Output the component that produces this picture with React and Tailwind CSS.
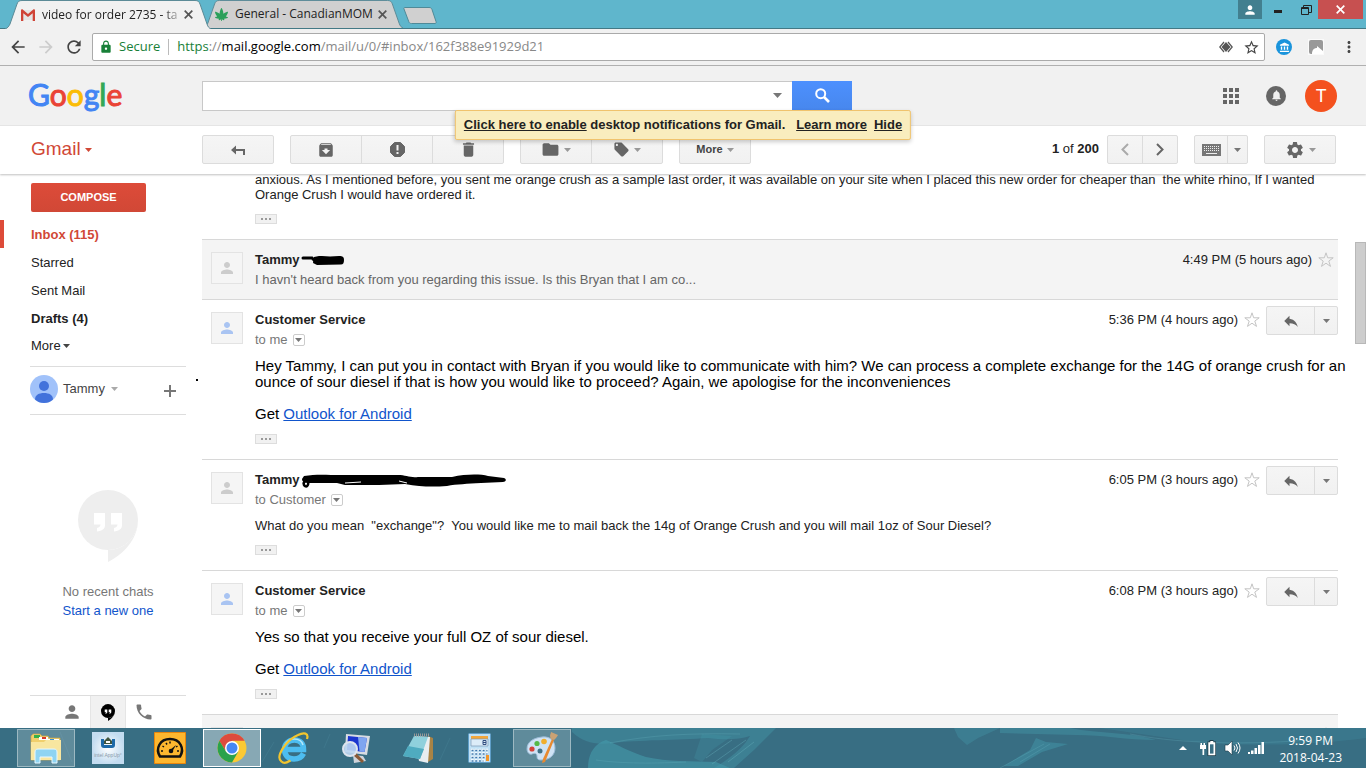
import React from "react";
import { FaCannabis } from "react-icons/fa";
import {
  MdAccountBalance,
  MdArchive,
  MdArrowBack,
  MdArrowForward,
  MdDelete,
  MdFolder,
  MdLocalOffer,
  MdLock,
  MdMoreVert,
  MdNotifications,
  MdPerson,
  MdPhone,
  MdRefresh,
  MdReply,
  MdSettings,
  MdStarBorder,
} from "react-icons/md";

const labels = [
  { name: "Inbox (115)", active: true, bold: true },
  { name: "Starred" },
  { name: "Sent Mail" },
  { name: "Drafts (4)", bold: true },
];

const Caret = ({ className = "text-[#777]" }) => (
  <svg width="7" height="4" viewBox="0 0 7 4" className={`shrink-0 ${className}`}>
    <path d="M0 0h7L3.500 4z" fill="currentColor" />
  </svg>
);

const Cross = () => (
  <svg width="9" height="9" viewBox="0 0 9 9" stroke="currentColor" strokeWidth="1.700">
    <path d="M.7.7l7.600 7.600M8.300.7L.7 8.300" />
  </svg>
);

const Star = () => (
  <button aria-label="Star" className="mt-1.5 text-[#c4c4c4]">
    <svg width="16" height="16" viewBox="0 0 16 16" fill="none" stroke="currentColor">
      <path d="M8 .8l1.700 5h5.500l-4.400 3.300 1.700 5.300L8 11.200l-4.500 3.200 1.700-5.300L.8 5.800h5.500z" />
    </svg>
  </button>
);

const Group = ({ children, className = "" }) => (
  <div
    className={`flex h-[29px] shrink-0 divide-x divide-[#dcdcdc] rounded-xs border border-[#dcdcdc] bg-linear-to-b from-[#f5f5f5] to-[#f1f1f1] text-[#666] ${className}`}
  >
    {children}
  </div>
);

const ToolButton = ({ label, children, className = "" }) => (
  <button aria-label={label} className={`flex flex-1 items-center justify-center gap-1 ${className}`}>
    {children}
  </button>
);

const TabShape = ({ fill }) => (
  <svg className="absolute inset-0 h-full w-full" viewBox="0 0 206 29" preserveAspectRatio="none">
    <path
      d="M0 29C3 28 4 26 5 24L12 4C13 1.500 14 .5 17 .5H190C193 .5 194 1.500 195 4L202 24C203 27 204 28 206 29"
      fill={fill}
      stroke="#5b8a96"
      strokeWidth="1"
    />
  </svg>
);

const BrowserTabs = () => (
  <div className="flex h-[29px] shrink-0 border-b border-[#437985] bg-[#5fb6cc] font-['Open_Sans',sans-serif] text-[12px] text-[#222]">
    <div className="relative z-10 ml-[5px] h-[29px] w-[206px] shrink-0">
      <TabShape fill="#f1f1f1" />
      <div className="relative flex h-full items-center pl-4 pr-[18px]">
        <svg width="14" height="12" viewBox="0 0 14 12" className="shrink-0">
          <path d="M1 1h12v10H1z" fill="#e4e4e4" />
          <path d="M0 1.500C0 .5 1 0 2 .7L7 5l5-4.300c1-.7 2-.2 2 .8V12h-2.300V4.300L7 8 2.300 4.300V12H0z" fill="#cf4336" />
        </svg>
        <span className="ml-[7px] flex-1 whitespace-nowrap mask-r-from-85% mask-r-to-100%">
          video for order 2735 - ta
        </span>
        <button aria-label="Close tab" className="text-[#555]">
          <Cross />
        </button>
      </div>
    </div>
    <div className="relative -ml-2 h-[28px] w-[200px] shrink-0">
      <TabShape fill="#d0d0d0" />
      <div className="relative flex h-full items-center pl-3 pr-4">
        <FaCannabis size={13} className="shrink-0 text-[#2ba05a]" />
        <span className="ml-[7px] flex-1 whitespace-nowrap">General - CanadianMOM</span>
        <button aria-label="Close tab" className="text-[#555]">
          <Cross />
        </button>
      </div>
    </div>
    <button aria-label="New tab" className="mt-[7px] h-[17px]">
      <svg width="34" height="17" viewBox="0 0 34 17">
        <path d="M1 2C.6 1 1 .5 2 .5h24c1.500 0 2.500.5 3 2l4 12c.4 1.300 0 2-1 2H8.500c-1.500 0-2.200-.5-2.700-1.800z" fill="#d0d0d0" stroke="#4f8a98" />
      </svg>
    </button>
    <div className="ml-auto flex h-[19px] items-center text-[#222]">
      <button aria-label="Profile" className="flex h-full w-6 items-center justify-center bg-[#427f8f] text-white">
        <MdPerson size={14} />
      </button>
      <button aria-label="Minimize" className="flex h-full w-8 items-end justify-center pb-1.5">
        <span className="h-[3px] w-2 bg-[#222]" />
      </button>
      <button aria-label="Restore" className="flex h-full w-6 items-center justify-center">
        <svg width="11" height="10" viewBox="0 0 11 10" fill="none" stroke="#222">
          <path d="M.5 2.500h7v7h-7zM.5 3.500h7M2.500 2.500V.5h8v7h-3" />
        </svg>
      </button>
      <button aria-label="Close" className="mr-[3px] flex h-full w-[45px] items-center justify-center bg-[#c75050] text-white">
        <Cross />
      </button>
    </div>
  </div>
);

const AddressBar = () => (
  <div className="flex h-[37px] shrink-0 items-center border-b border-[#b0b0b0] bg-[#f1f1f1] pl-2 font-['Open_Sans',sans-serif] text-[13px] text-[#444]">
    <button aria-label="Back" className="mr-2">
      <MdArrowBack size={20} />
    </button>
    <button aria-label="Forward" className="mr-2 text-[#ccc]">
      <MdArrowForward size={20} />
    </button>
    <button aria-label="Reload" className="mr-2">
      <MdRefresh size={20} />
    </button>
    <div className="flex h-7 flex-1 items-center rounded-xs border border-[#aaa] bg-white pl-1.5 pr-1">
      <MdLock size={14} className="text-[#188038]" />
      <span className="ml-1.5 text-[#188038]">Secure</span>
      <span className="mx-2 h-4 w-px bg-[#bbb]" />
      <div
        role="textbox"
        aria-label="Address"
        contentEditable
        suppressContentEditableWarning
        className="flex-1 whitespace-nowrap text-[#888] outline-none"
      >
        <span className="text-[#188038]">https</span>://<span className="text-black">mail.google.com</span>
        /mail/u/0/#inbox/162f388e91929d21
      </div>
      <svg width="14" height="12" viewBox="0 0 14 12" className="mr-2.5">
        <path d="M5 1L.8 6 5 11M9 1l4.200 5L9 11" fill="none" stroke="#555" strokeWidth="1.200" />
        <path d="M7 1l4.500 5L7 11 2.500 6z" fill="#555" />
      </svg>
      <button aria-label="Bookmark this page">
        <MdStarBorder size={17} />
      </button>
    </div>
    <button aria-label="Library extension" className="ml-[11px] flex size-4 items-center justify-center rounded-full bg-[#1a94dc] text-white">
      <MdAccountBalance size={11} />
    </button>
    <button aria-label="Cast extension" className="ml-4">
      <svg width="16" height="16" viewBox="0 0 16 16">
        <path d="M0 0h16v16H0z" fill="#fafafa" />
        <rect x="1" y="1" width="14" height="14" rx="2" fill="#999" />
        <path d="M4 15c0-4 2-6 5-6V7l6 5v3z" fill="#fff" />
      </svg>
    </button>
    <button aria-label="Menu" className="ml-4 mr-2">
      <MdMoreVert size={18} />
    </button>
  </div>
);

const GoogleBar = () => (
  <header className="relative z-30 flex h-[60px] shrink-0 items-center border-b border-[#e5e5e5] bg-[#f1f1f1]">
    <a
      href="#home"
      className="w-[202px] shrink-0 pb-1 pl-7 font-['Lato',sans-serif] text-[30px] leading-9 text-[#4285f4] [-webkit-text-stroke:1px]"
    >
      G<span className="text-[#ea4335]">o</span>
      <span className="text-[#fbbc05]">o</span>g<span className="text-[#34a853]">l</span>
      <span className="text-[#ea4335]">e</span>
    </a>
    <form className="flex h-[30px] w-[650px]">
      <div className="flex flex-1 items-center border border-r-0 border-[#c8c8c8] bg-white pr-2.5">
        <input aria-label="Search mail" className="h-full flex-1 px-2 text-[16px] outline-none" />
        <button type="button" aria-label="Search options">
          <svg width="9" height="5" viewBox="0 0 9 5">
            <path d="M0 0h9L4.500 5z" fill="#777" />
          </svg>
        </button>
      </div>
      <button type="button" aria-label="Search" className="flex w-[60px] items-center justify-center bg-linear-to-b from-[#4d90fe] to-[#4787ed] text-white">
        <svg width="15" height="15" viewBox="0 0 15 15" fill="none" stroke="currentColor">
          <circle cx="5.700" cy="5.700" r="4.500" strokeWidth="2" />
          <path d="M9 9l5 5" strokeWidth="2.600" />
        </svg>
      </button>
    </form>
    <div className="ml-auto flex items-center pr-[29px]">
      <button aria-label="Apps" className="grid grid-cols-3 gap-[2px]">
        {Array.from({ length: 9 }).map((_, i) => (
          <span key={i} className="size-1 bg-[#666]" />
        ))}
      </button>
      <button aria-label="Notifications" className="ml-[27px] flex size-5 items-center justify-center rounded-full bg-[#666] text-[#f1f1f1]">
        <MdNotifications size={13} />
      </button>
      <button className="ml-[19px] size-8 rounded-full bg-[#f4511e] font-['Roboto',sans-serif] text-[18px] leading-8 text-white">
        T
      </button>
    </div>
    <div className="absolute top-11 left-1/2 flex h-[30px] -translate-x-1/2 items-center rounded-xs border border-[#f0c36d] bg-[#f9edbe] px-2 text-[13px] font-bold whitespace-pre text-[#222] shadow-[0_2px_4px_rgba(0,0,0,0.2)]">
      <a href="#enable" className="underline">Click here to enable</a>
      <span>{" desktop notifications for Gmail.   "}</span>
      <a href="#learn" className="underline">Learn more</a>
      <a href="#hide" className="ml-[7px] underline">Hide</a>
    </div>
  </header>
);

const Toolbar = () => (
  <div className="relative z-20 flex h-12 shrink-0 items-start bg-white pt-[9px] pr-[30px] shadow-[0_1px_2px_rgba(0,0,0,0.25)]">
    <button className="flex h-[29px] w-[202px] shrink-0 items-center gap-1 pl-[31px] text-[19px] text-[#d14836]">
      Gmail <Caret className="text-[#d14836]" />
    </button>
    <Group className="mr-4 w-[72px]">
      <ToolButton label="Back to Inbox">
        <svg width="14" height="10" viewBox="0 0 14 10">
          <path d="M0 5l5-4.500V4h9v6h-2V6H5v3.500z" fill="#666" />
        </svg>
      </ToolButton>
    </Group>
    <Group className="mr-4 w-[214px]">
      <ToolButton label="Archive"><MdArchive size={18} /></ToolButton>
      <ToolButton label="Report spam">
        <svg width="15" height="15" viewBox="0 0 15 15">
          <path d="M4.500.5h6l4 4v6l-4 4h-6l-4-4v-6z" fill="#666" stroke="#666" strokeLinejoin="round" />
          <path d="M6.500 3h2v5.500h-2zM6.500 10h2v2h-2z" fill="#f3f3f3" />
        </svg>
      </ToolButton>
      <ToolButton label="Delete"><MdDelete size={19} /></ToolButton>
    </Group>
    <Group className="mr-4 w-[143px]">
      <ToolButton label="Move to"><MdFolder size={19} /><Caret className="text-[#999]" /></ToolButton>
      <ToolButton label="Labels"><MdLocalOffer size={17} /><Caret className="text-[#999]" /></ToolButton>
    </Group>
    <Group className="w-[72px]">
      <ToolButton label="More" className="text-[11px] font-bold text-[#444]">More<Caret className="text-[#999]" /></ToolButton>
    </Group>
    <div className="mr-2 ml-auto text-[13px] leading-7 whitespace-nowrap text-[#222]">
      <b>1</b> of <b>200</b>
    </div>
    <Group className="mr-4 w-[71px]">
      <ToolButton label="Newer">
        <svg width="8" height="13" viewBox="0 0 8 13" fill="none" stroke="#aaa" strokeWidth="2"><path d="M7 1L1.500 6.500 7 12" /></svg>
      </ToolButton>
      <ToolButton label="Older">
        <svg width="8" height="13" viewBox="0 0 8 13" fill="none" stroke="#666" strokeWidth="2"><path d="M1 1l5.500 5.500L1 12" /></svg>
      </ToolButton>
    </Group>
    <Group className="mr-4 w-[54px]">
      <ToolButton label="Input tools">
        <svg width="19" height="12" viewBox="0 0 19 12">
          <path d="M0 0h19v12H0z" fill="#777" />
          <path d="M2 2.500h15M2 4.500h15M2 6.500h15" stroke="#eee" strokeDasharray="1 1" />
          <path d="M4 9.500h11" stroke="#eee" />
        </svg>
      </ToolButton>
      <button aria-label="Choose input tool" className="flex w-[19px] items-center justify-center"><Caret /></button>
    </Group>
    <Group className="w-[72px]">
      <ToolButton label="Settings"><MdSettings size={20} /><Caret className="text-[#999]" /></ToolButton>
    </Group>
  </div>
);

const HangoutsIcon = ({ width, height, quote }) => (
  <svg width={width} height={height} viewBox="0 0 60 72" fill="currentColor">
    <path d="M30 0a30 30 0 1 1 0 60v12c18-9 30-25 30-42A30 30 0 0 0 30 0z" />
    <circle cx="30" cy="30" r="30" />
    <path d="M16 23h11v12c0 4-3 6-8 6.500V38c2-.5 3.500-1.500 3.500-3.500H16zM33 23h11v12c0 4-3 6-8 6.500V38c2-.5 3.500-1.500 3.500-3.500H33z" fill={quote} />
  </svg>
);

const Sidebar = () => (
  <aside className="flex w-[202px] shrink-0 flex-col pt-[9px] text-[13px] text-[#222]">
    <button className="mb-2 ml-[31px] h-[29px] w-[115px] rounded-xs bg-linear-to-b from-[#dd4b39] to-[#d14836] text-[11px] font-bold text-white">
      COMPOSE
    </button>
    <nav className="flex flex-col">
      {labels.map((l) => (
        <a
          key={l.name}
          href={`#${l.name}`}
          className={`h-7 border-l-4 pl-[27px] leading-[30px] ${l.active ? "border-[#dd4b39] text-[#d14836]" : "border-transparent"} ${l.bold ? "font-bold" : ""}`}
        >
          {l.name}
        </a>
      ))}
      <button className="flex h-[27px] items-center gap-0.5 pl-[31px]">
        More <Caret className="text-[#444]" />
      </button>
    </nav>
    <div className="relative mt-[7px] mr-4 ml-[30px] flex h-[49px] items-center border-y border-[#ddd]">
      <svg width="28" height="28" viewBox="0 0 28 28" className="mb-1">
        <circle cx="14" cy="14" r="14" fill="#a1c2fa" />
        <circle cx="14" cy="11" r="5" fill="#4272db" />
        <path d="M5 24.500C5 20 9 18 14 18s9 2 9 6.500C20.500 27 17.500 28 14 28s-6.500-1-9-3.500z" fill="#4272db" />
      </svg>
      <button className="mb-1 ml-[5px] flex items-center gap-1.5 text-[#444]">
        Tammy <Caret className="text-[#aaa]" />
      </button>
      <button aria-label="New conversation" className="mr-2.5 ml-auto">
        <svg width="12" height="12" viewBox="0 0 12 12"><path d="M5 0h2v5h5v2H7v5H5V7H0V5h5z" fill="#777" /></svg>
      </button>
      <span className="absolute top-3 -right-3 size-0.5 bg-black" />
    </div>
    <div className="flex flex-1 flex-col items-center pt-[75px] pr-[14px] pl-7">
      <span className="text-[#eee]"><HangoutsIcon width={60} height={72} quote="#fff" /></span>
      <p className="mt-5 leading-[19px] text-[#777]">No recent chats</p>
      <a href="#chat" className="leading-[19px] text-[#15c]">Start a new one</a>
    </div>
    <div className="mr-4 ml-[30px] flex h-[33px] justify-center border-t border-[#ddd] text-[#777]">
      <button aria-label="Contacts" className="flex w-9 items-center justify-center"><MdPerson size={20} /></button>
      <button aria-label="Hangouts" className="flex w-9 items-center justify-center border-x border-[#e5e5e5] bg-[#f1f1f1] text-black">
        <HangoutsIcon width={14} height={17} quote="#fff" />
      </button>
      <button aria-label="Phone" className="flex w-9 items-center justify-center"><MdPhone size={20} /></button>
    </div>
  </aside>
);

const Dots = () => (
  <button aria-label="Show trimmed content" className="mt-3 flex h-2.5 w-[22px] items-center justify-center gap-[2px] border border-[#ddd] bg-[#f1f1f1]">
    <span className="size-[2px] bg-[#999]" />
    <span className="size-[2px] bg-[#999]" />
    <span className="size-[2px] bg-[#999]" />
  </button>
);

const Message = ({ name, mark, blue, to, snippet, time, children }) => (
  <article className={`flex border-t border-[#d8d8d8] pl-[9px] ${to ? "pb-[15px]" : "bg-[#f4f4f4] pb-[9px]"}`}>
    <div className={`mt-3 flex size-8 shrink-0 items-center justify-center border border-[#e3e3e3] bg-[#f5f5f5] ${blue ? "text-[#a9c4f2]" : "text-[#ccc]"}`}>
      <MdPerson size={18} />
    </div>
    <div className="ml-3 min-w-0 flex-1">
      <div className="flex h-[30px] pt-2.5 leading-5 text-[#222]">
        <b>{name}</b>
        {mark}
        <div className={`-mt-1 ml-auto flex h-[29px] items-start gap-1.5 whitespace-nowrap ${to ? "" : "pr-1"}`}>
          <time className="mt-1">{time}</time>
          <Star />
          {to && (
            <Group className="w-[72px]">
              <ToolButton label="Reply"><MdReply size={18} /></ToolButton>
              <button aria-label="More options" className="flex w-[22px] items-center justify-center"><Caret /></button>
            </Group>
          )}
        </div>
      </div>
      {to ? (
        <div className="mb-2 flex h-5 items-center gap-[5px] text-[#777]">
          to {to}
          <button aria-label="Show details" className="flex size-3 items-center justify-center rounded-xs border border-[#ccc]">
            <Caret />
          </button>
        </div>
      ) : (
        <p className="leading-5 text-[#666]">{snippet}</p>
      )}
      {children}
    </div>
  </article>
);

const Signature = () => (
  <p className="mt-4">
    Get <a href="#outlook" className="text-[#15c] underline">Outlook for Android</a>
  </p>
);

const Thread = () => (
  <main className="relative -mt-0.5 min-w-0 flex-1 overflow-hidden pr-7 text-[13px]">
    <div className="pb-[15px] pl-[53px] leading-[15px] text-[#222]">
      <p className="whitespace-pre-wrap">
        {"anxious. As I mentioned before, you sent me orange crush as a sample last order, it was available on your site when I placed this new order for cheaper than  the white rhino, If I wanted Orange Crush I would have ordered it."}
      </p>
      <Dots />
    </div>
    <Message
      name="Tammy"
      time="4:49 PM (5 hours ago)"
      snippet="I havn't heard back from you regarding this issue. Is this Bryan that I am co..."
      mark={
        <svg width="44" height="20" viewBox="0 0 44 20" className="ml-px">
          <path d="M2 8h9l4 4M12 9l28 1" stroke="#000" strokeWidth="3" strokeLinecap="round" fill="none" />
          <path d="M13 7l5-1h3l8 .5L38 6c4 0 5 1 5 4s-1 4.500-3 4.500L16 15l-4-2z" />
        </svg>
      }
    />
    <Message name="Customer Service" to="me" blue time="5:36 PM (4 hours ago)">
      <div className="-mr-3 text-[15px] leading-4 text-black">
        <p>
          Hey Tammy, I can put you in contact with Bryan if you would like to communicate with him? We can process a
          complete exchange for the 14G of orange crush for an ounce of sour diesel if that is how you would like to
          proceed? Again, we apologise for the inconveniences
        </p>
        <Signature />
      </div>
      <Dots />
    </Message>
    <Message
      name="Tammy"
      to="Customer"
      time="6:05 PM (3 hours ago)"
      mark={
        <svg width="206" height="20" viewBox="0 0 206 20" className="ml-px">
          <path d="M3 15c2 3 5 1 4-4-3-1-5 1-4 4z" fill="none" stroke="#000" strokeWidth="2.500" />
          <path d="M3 6c12-2 22-1 38-1l56 0c8 0 12 3 20 2l34 0c14-3 28-3 36-1l16 2c3 1 2 4-1 4l-22 1c-14 1-24 1-34 3-14 1-26 1-42-2l-26 1H44l-8-2H8c-4 0-7-1-7-4z" />
          <path d="M44 13l16-1M98 11l8 2" stroke="#fff" />
        </svg>
      }
    >
      <p className="leading-[15px] whitespace-pre-wrap text-[#222]">
        {'What do you mean  "exchange"?  You would like me to mail back the 14g of Orange Crush and you will mail 1oz of Sour Diesel?'}
      </p>
      <Dots />
    </Message>
    <Message name="Customer Service" to="me" blue time="6:08 PM (3 hours ago)">
      <div className="-mr-3 text-[15px] leading-4 text-black">
        <p>Yes so that you receive your full OZ of sour diesel.</p>
        <Signature />
      </div>
      <Dots />
    </Message>
    <Message />
    <div className="absolute top-[70px] right-0 h-[102px] w-[11px] border border-[#b8b8b8] bg-[#cdcdcd]" />
  </main>
);

const ExplorerIcon = () => (
  <svg width="32" height="32" viewBox="0 0 32 32">
    <path d="M1 4l2-2h7l2 2h6l1 2h11v22H1z" fill="#f0cf6c" stroke="#c9a84b" strokeWidth=".7" />
    <path d="M4 3h6v3H4z" fill="#35b04a" />
    <path d="M9 5h9v3H9z" fill="#fff" /><path d="M12 5h4v2h-4z" fill="#d8392b" />
    <path d="M17 7h12v3H17z" fill="#fff" /><path d="M20 7h4v2h-4z" fill="#3a8fd0" />
    <path d="M1 10h13l2-2h15v20H1z" fill="#f8e6a0" />
    <path d="M5 31V20c0-2 1-3 3-3h16c2 0 3 1 3 3v11h-5v-6H10v6z" fill="#8fd4f2" stroke="#e8f8ff" />
  </svg>
);

const AppUpIcon = () => (
  <svg width="32" height="32" viewBox="0 0 32 32">
    <defs>
      <radialGradient id="appup"><stop offset="0" stopColor="#fff" /><stop offset="1" stopColor="#c3dcf0" /></radialGradient>
    </defs>
    <path d="M0 0h32v32H0z" fill="url(#appup)" />
    <path d="M9 7h3v6h8V7h3v6c0 2-1 3-3 3h-8c-2 0-3-1-3-3z" fill="#1e6aa8" />
    <path d="M12 9l4-4 4 4v3h-8z" fill="#41563f" /><path d="M14 9h4v2h-4z" fill="#fff" />
    <text x="16" y="25" fontSize="5" fill="#8a9aa8" textAnchor="middle" className="font-['Liberation_Sans',sans-serif]">intel AppUp°</text>
  </svg>
);

const GaugeIcon = () => (
  <svg width="32" height="32" viewBox="0 0 32 32">
    <path d="M.5.5h31v31H.5z" fill="#fdb72f" stroke="#e8860c" />
    <path d="M6 24.500c-5-8 0-17.500 10-17.500s15 9.500 10 17.500z" fill="none" stroke="#111" strokeWidth="2.500" strokeLinejoin="round" />
    <path d="M7 19h2M8.500 14l1.500 1M12 11l1 1.500M16 9.500v2M25 19h-2M23.500 14l-1.500 1" stroke="#111" strokeWidth="1.500" />
    <path d="M16 18l6-5-4 7z" fill="#111" /><circle cx="17" cy="19" r="2.300" fill="#111" />
  </svg>
);

const ChromeIcon = () => (
  <svg width="30" height="30" viewBox="0 0 30 30">
    <circle cx="15" cy="15" r="14.500" fill="#fbc934" />
    <path d="M2.400 7.800A14.500 14.500 0 0 1 27.600 7.800H15L9 18.500z" fill="#dd4b3e" />
    <path d="M2.400 7.800A14.500 14.500 0 0 0 15 29.500l6.200-10.700L9 18.500z" fill="#2ba24c" />
    <circle cx="15" cy="15" r="7" fill="#fff" />
    <circle cx="15" cy="15" r="5.500" fill="#4687f4" />
  </svg>
);

const IeIcon = () => (
  <svg width="32" height="32" viewBox="0 0 32 32" fill="none">
    <path d="M25.500 21.500c-1.700 3.500-5 5.500-9.500 5.500-6 0-9.500-4-9.500-9.500S10.500 8 16.500 8s9 4 9 9.500H9" stroke="#4dbdf0" strokeWidth="5.500" />
    <path d="M7 13c2-4 5-6 9-6s8 2 9 6" stroke="#b5e8fb" strokeWidth="1.500" />
    <path d="M3.500 29.500C-3 25 8 8 20 3c6-3 11-2 9 4M3.500 29.500c2 2 6 1 9-1" stroke="#f3c52e" strokeWidth="2.200" />
  </svg>
);

const MonitorIcon = () => (
  <svg width="32" height="32" viewBox="0 0 32 32">
    <path d="M6 2l24 2-3 19L5 20z" fill="#d7dbe2" /><path d="M8 4l19 2-2.500 14L7 18z" fill="#1c35cf" />
    <path d="M18 5l9 1-2.500 14-5-.5z" fill="#7fa5f0" />
    <path d="M13 23l10 1 3 5-12 2z" fill="#cfd3da" />
    <path d="M15 20l9 9-2 2-9-8z" fill="#8a5a36" />
    <circle cx="10" cy="17" r="7" fill="#bcd6f2" fillOpacity=".9" stroke="#dde4ee" strokeWidth="2" />
  </svg>
);

const NotepadIcon = () => (
  <svg width="32" height="32" viewBox="0 0 32 32">
    <path d="M26 4l5 2v21l-5 3z" fill="#a98345" />
    <path d="M12 4l16 1-2 26-9-2z" fill="#e8edf0" />
    <path d="M12 4l14 1-8 22L1 24z" fill="#8fd0dc" /><path d="M6 14l16 3-4 10L1 24z" fill="#4fabc0" />
    <path d="M12 3h16" stroke="#999" strokeWidth="3" strokeDasharray="1 1" />
  </svg>
);

const CalcIcon = () => (
  <svg width="24" height="30" viewBox="0 0 24 30">
    <rect x=".5" y=".5" width="22" height="29" rx="1" fill="#bfe0f5" stroke="#5f9ec8" />
    <path d="M3 3h17v3H3z" fill="#f2a63b" /><path d="M3 6h17v7H3z" fill="#dcecf8" stroke="#7d9ab5" strokeWidth=".7" />
    <path d="M15 7.500h3v4h-3zM15 9.500h3" fill="none" stroke="#334f80" />
    <path d="M3 17h17M3 20.500h17M3 24h17M3 27.500h14" stroke="#fff" strokeWidth="2.500" strokeDasharray="2.700 1" />
    <path d="M3.500 17.500h16M3.500 21h16M3.500 24.500h16M3.500 28h12" stroke="#3f78ad" strokeWidth="1.500" strokeDasharray="2 1.700" />
    <path d="M18 22h3v6h-3z" fill="#f2962b" />
  </svg>
);

const PaintIcon = () => (
  <svg width="34" height="34" viewBox="0 0 34 34">
    <path d="M17 6c8-1 13 4 13 11S25 29 16 29c-4 0-4-2-4-4 0-3-3-3-5-2s-5-1-5-5C2 11 8 7 17 6z" fill="#cfe3f5" stroke="#9cbcd8" />
    <circle cx="7" cy="18" r="2.600" fill="#d6423a" /><circle cx="12" cy="12.500" r="2.600" fill="#57b947" />
    <circle cx="19" cy="10.500" r="2.800" fill="#f0ae2d" /><circle cx="15" cy="20" r="2.500" fill="#3f7187" />
    <path d="M27 8l2 1-9 22-3 1 1-4z" fill="#e88a30" />
    <path d="M26 8c-2-4 0-5 0-7l7 3c-1 2-2 3-4 5z" fill="#c9a274" />
  </svg>
);

const apps = [
  { name: "File Explorer", icon: <ExplorerIcon />, tile: "border-[#9db9c2] bg-white/20" },
  { name: "Intel AppUp", icon: <AppUpIcon />, tile: "border-transparent" },
  { name: "Performance", icon: <GaugeIcon />, tile: "border-transparent" },
  { name: "Chrome", icon: <ChromeIcon />, tile: "border-white bg-white/40" },
  { name: "Internet Explorer", icon: <IeIcon />, tile: "border-transparent" },
  { name: "Remote Desktop", icon: <MonitorIcon />, tile: "border-transparent" },
  { name: "Notepad", icon: <NotepadIcon />, tile: "border-transparent" },
  { name: "Calculator", icon: <CalcIcon />, tile: "border-transparent" },
  { name: "Paint", icon: <PaintIcon />, tile: "border-[#9db9c2] bg-white/20" },
];

const Taskbar = () => (
  <footer className="relative z-30 flex h-10 shrink-0 items-center bg-[#386e83] pl-[17px] font-['Open_Sans',sans-serif] text-[12px] text-white">
    <svg className="absolute inset-0 h-full w-full" viewBox="0 0 1366 40" preserveAspectRatio="none" fill="#459bac">
      <path d="M572 0h204l-10 10-12 12-20 18h-20c20-12 30-22 36-32-12 4-26 4-42 2-30 2-70 2-96 5-16 2-28 0-40-11z" opacity=".4" />
      <path d="M588 40c0-14 6-24 18-28 10 4 24 12 40 17 22 5 44 4 70 5l14 6z" opacity=".6" />
      <path d="M702 6l30 2-20 14-10 12-8-4z" opacity=".25" />
      <path d="M954 0h46l-22 10-11 7-9-8z" opacity=".35" />
      <path d="M1000 0h70c30 6 60 4 86 12-30 0-52-5-80-5l-76-2z" opacity=".4" />
      <path d="M1036 10l-6 12-26 16h14l24-14 26-8-22-2z" opacity=".45" />
      <path d="M1100 0h266v10c-60 8-120 8-170 4z" opacity=".22" />
      <g fill="none" stroke="#6db7c4">
        <path d="M706 30l26-18M712 36l34-24M728 34l26-20" opacity=".35" />
        <path d="M610 15c40-8 80-10 130-9M596 32c20 3 50 4 90 2M1020 34l30-18M1000 40l44-24M1130 6c40 8 100 12 180 6" opacity=".25" />
        <path d="M60 4l12 30M262 34l12-20M120 8l-8 26M330 6l-6 14M450 10l-10 22" opacity=".12" />
      </g>
    </svg>
    <div className="relative flex gap-1">
      {apps.map((a) => (
        <button key={a.name} aria-label={a.name} className={`flex h-[38px] w-[58px] items-center justify-center border ${a.tile}`}>
          {a.icon}
        </button>
      ))}
    </div>
    <div className="relative ml-auto flex items-center pr-6">
      <button aria-label="Show hidden icons">
        <svg width="8" height="4" viewBox="0 0 8 4"><path d="M4 0l4 4H0z" fill="#fff" /></svg>
      </button>
      <svg width="16" height="16" viewBox="0 0 16 16" className="ml-[13px]" fill="#fff">
        <path d="M.5 3h1.500v2h1.500V3H5v2h1v4H4.200v6H2.500V9H0V5h.5z" />
        <path d="M7.500 1.500H9.500V0h4v1.500H16V16H7.500z" fill="#1c3a46" />
        <path d="M8.300 2.300h2V1h3v1.300h2v13H8.300z" /><path d="M10 4.300h3.500v9.300H10z" fill="#386e83" />
      </svg>
      <svg width="17" height="16" viewBox="0 0 17 16" className="ml-2" fill="#fff">
        <path d="M1 5h3l4-4v14l-4-4H1z" stroke="#1c3a46" strokeWidth=".6" />
        <path d="M10 5.500q2 2.500 0 5M12 4q3 4 0 8M14 2.500q4 5.500 0 11" fill="none" stroke="#fff" />
      </svg>
      <svg width="16" height="12" viewBox="0 0 16 12" className="ml-[7px]" fill="#fff">
        <path d="M0 10h2v2H0zM3 8.500h2.500V12H3zM6.500 6H9v6H6.500zM10 3h2.500v9H10zM13.500 0H16v12h-2.500z" />
      </svg>
      <div className="ml-[15px] pt-0.5 text-center leading-[17px]">
        <div>9:59 PM</div>
        <div>2018-04-23</div>
      </div>
    </div>
  </footer>
);

export default function App() {
  return (
    <div className="flex h-screen flex-col overflow-hidden bg-white font-['Liberation_Sans',Arial,sans-serif]">
      <BrowserTabs />
      <AddressBar />
      <GoogleBar />
      <Toolbar />
      <div className="flex min-h-0 flex-1">
        <Sidebar />
        <Thread />
      </div>
      <Taskbar />
    </div>
  );
}
